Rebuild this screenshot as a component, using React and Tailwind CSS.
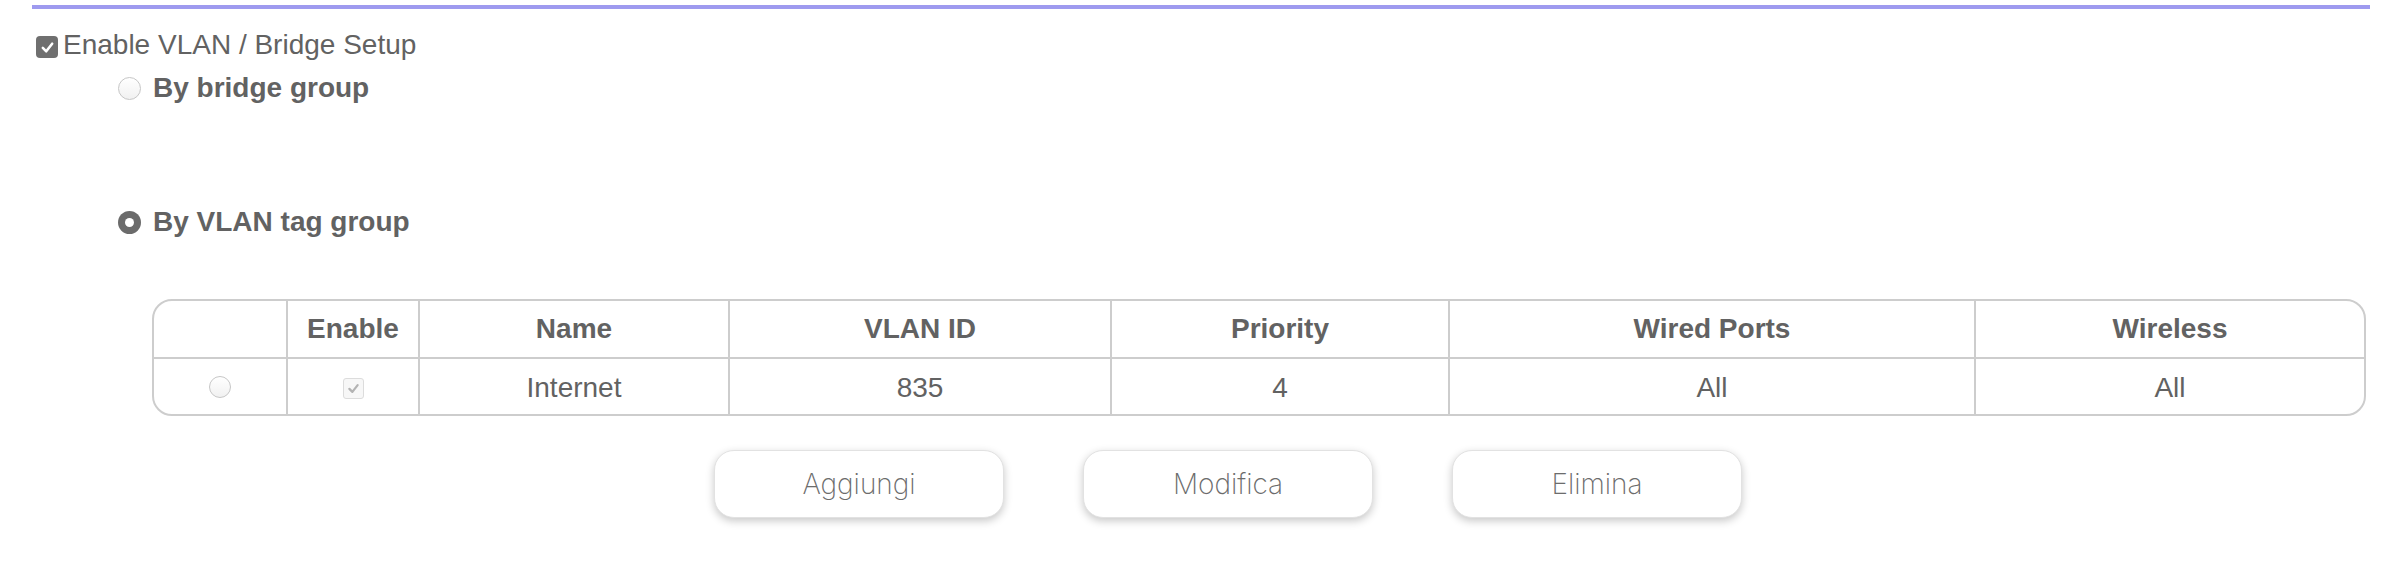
import React from 'react';

const Check = ({ className }) => (
  <svg viewBox="0 0 20 20" className={className} fill="none">
    <path d="M4.5 10.5 L8.5 14.5 L15.5 5.5" stroke="currentColor" strokeWidth="3" strokeLinecap="round" strokeLinejoin="round" />
  </svg>
);

const Radio = ({ checked, size = 'w-[23px] h-[23px]' }) =>
  checked ? (
    <span className={`${size} rounded-full bg-[#6b6b6b] flex items-center justify-center shrink-0`}>
      <span className="w-[9px] h-[9px] rounded-full bg-white" />
    </span>
  ) : (
    <span className={`${size} rounded-full border border-[#c6c6c6] bg-gradient-to-b from-white to-[#f1f1f1] shrink-0`} />
  );

const columns = [
  { label: '', w: 'w-[132px]' },
  { label: 'Enable', w: 'w-[132px]' },
  { label: 'Name', w: 'w-[310px]' },
  { label: 'VLAN ID', w: 'w-[382px]' },
  { label: 'Priority', w: 'w-[338px]' },
  { label: 'Wired Ports', w: 'w-[526px]' },
  { label: 'Wireless', w: 'w-[390px]' },
];

const row = ['radio', 'check', 'Internet', '835', '4', 'All', 'All'];

export default function App() {
  return (
    <div className="w-[2384px] h-[562px] bg-white overflow-hidden font-['Liberation_Sans',Arial,sans-serif] text-[#626262]">
      <div className="ml-[32px] mt-[5px] w-[2338px] h-[4px] bg-[#9e9aef]" />

      {/* enable checkbox */}
      <div className="ml-[36px] mt-[20px] h-[32px] flex items-center text-[28px] leading-[32px]">
        <span className="w-[22px] h-[22px] rounded-[4px] bg-[#6f6f6f] text-white flex items-center justify-center mt-[4px]">
          <Check className="w-[17px] h-[17px]" />
        </span>
        <span className="ml-[5px]">Enable VLAN / Bridge Setup</span>
      </div>

      <div className="ml-[118px] mt-[11px] h-[32px] flex items-center gap-[12px] text-[28px] leading-[32px] font-bold">
        <Radio />
        <span>By bridge group</span>
      </div>

      <div className="ml-[118px] mt-[102px] h-[32px] flex items-center gap-[12px] text-[28px] leading-[32px] font-bold">
        <Radio checked />
        <span>By VLAN tag group</span>
      </div>

      {/* table */}
      <div className="ml-[152px] mt-[61px] w-[2214px] border-2 border-[#cdcdcd] rounded-[20px] overflow-hidden text-[28px] leading-[32px]">
        <div className="flex h-[56px]">
          {columns.map((c, i) => (
            <div
              key={i}
              className={`${c.w} flex items-center justify-center font-bold ${i > 0 ? 'border-l-2 border-[#cdcdcd]' : ''}`}
            >
              {c.label}
            </div>
          ))}
        </div>
        <div className="flex h-[57px] border-t-2 border-[#cdcdcd]">
          {row.map((v, i) => (
            <div
              key={i}
              className={`${columns[i].w} flex items-center justify-center ${i > 0 ? 'border-l-2 border-[#cdcdcd]' : ''}`}
            >
              {v === 'radio' ? (
                <Radio size="w-[22px] h-[22px]" />
              ) : v === 'check' ? (
                <span className="w-[21px] h-[21px] rounded-[3px] border border-[#dcdcdc] bg-[#f7f7f7] text-[#b3b3b3] flex items-center justify-center mt-[3px]">
                  <Check className="w-[15px] h-[15px]" />
                </span>
              ) : (
                <span className="mt-[3px]">{v}</span>
              )}
            </div>
          ))}
        </div>
      </div>

      {/* buttons */}
      <div className="ml-[714px] mt-[34px] flex gap-[79px]">
        {['Aggiungi', 'Modifica', 'Elimina'].map((b) => (
          <button
            key={b}
            type="button"
            className="w-[290px] h-[68px] rounded-[20px] bg-white border border-[#e2e2e2] shadow-[0_3px_8px_rgba(0,0,0,0.22)] text-[28px] font-extralight text-[#6c6c6c] font-['Inter','Liberation_Sans',sans-serif]"
          >
            {b}
          </button>
        ))}
      </div>
    </div>
  );
}
